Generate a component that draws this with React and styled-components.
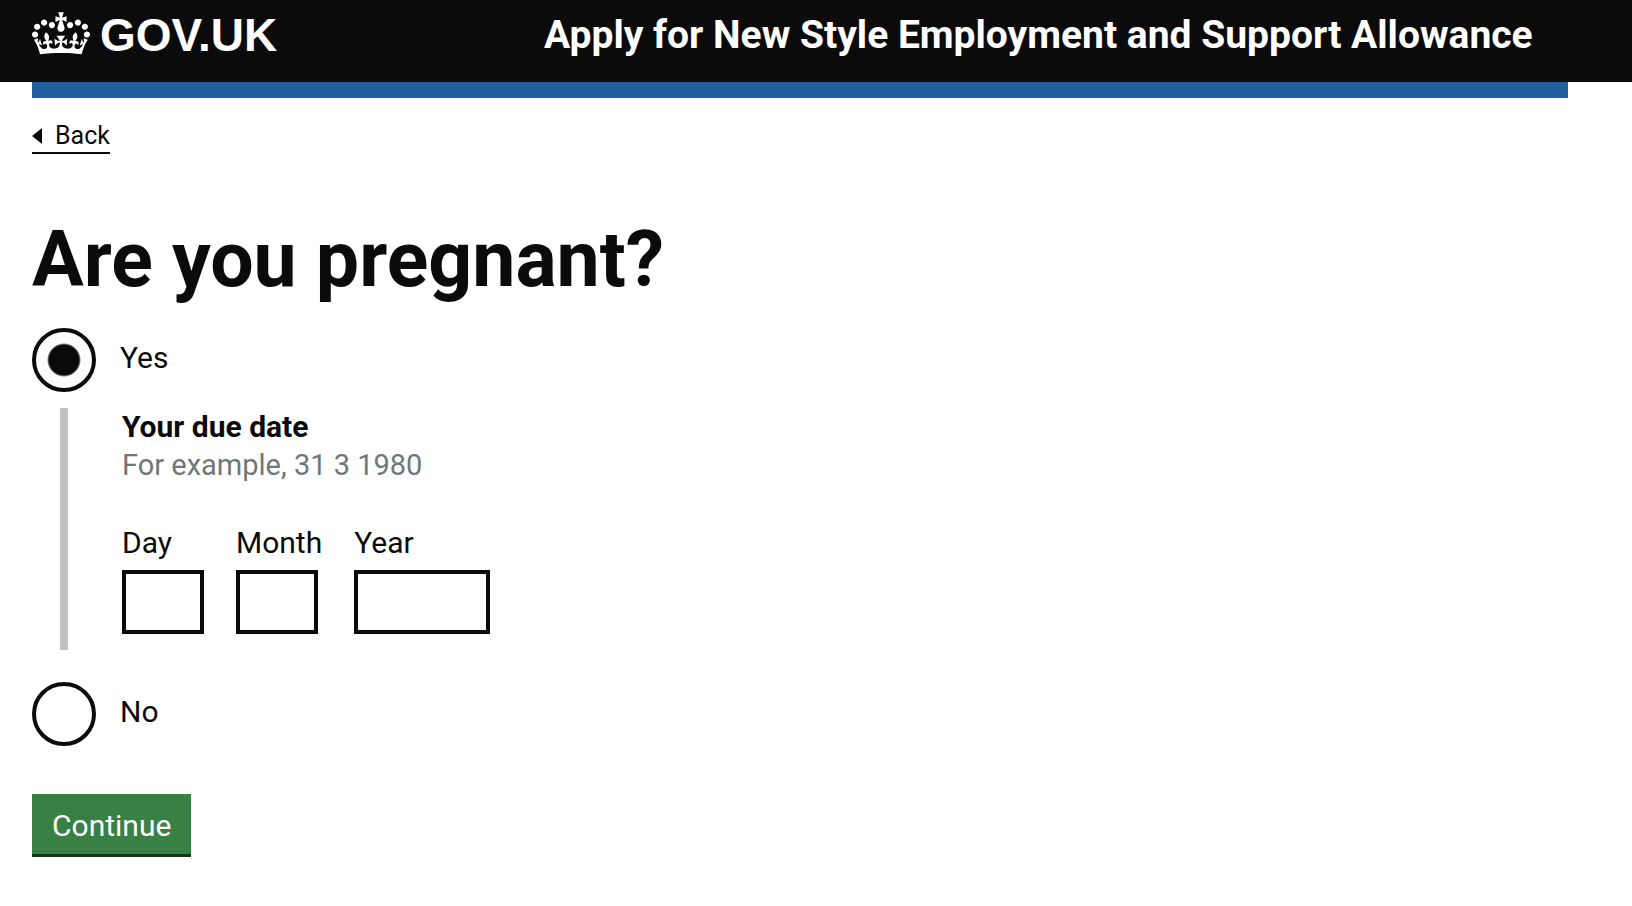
import React, { useState } from "react";
import styled, { createGlobalStyle } from "styled-components";

const ink = "#0b0b0b";

const GlobalStyle = createGlobalStyle`
  *, *::before, *::after {
    box-sizing: border-box;
  }

  body {
    margin: 0;
    background: #ffffff;
    color: ${ink};
    font-family: Roboto, "Liberation Sans", sans-serif;
    font-size: 30px;
    line-height: 38px;
  }
`;

const Header = styled.header`
  background: ${ink};
  color: #ffffff;
`;

const HeaderInner = styled.div`
  display: grid;
  grid-template-columns: 1fr 2fr;
  height: 82px;
  margin: 0 64px 0 32px;
`;

const LogoLink = styled.a`
  display: flex;
  gap: 10px;
  height: 67px;
  align-items: center;
  color: inherit;
  font: bold 46px/50px "Liberation Sans", Arial, sans-serif;
  text-decoration: none;
`;

const LogoText = styled.span`
  padding-top: 2px;
`;

const Crown = styled.svg`
  width: 58px;
  height: 43px;
  fill: currentColor;
`;

const ServiceLink = styled.a`
  padding-top: 12px;
  color: inherit;
  font-size: 39px;
  font-weight: 700;
  line-height: 46px;
  text-decoration: none;
  white-space: nowrap;
`;

const Container = styled.div`
  margin: 0 64px 0 32px;
`;

const BlueBar = styled.div`
  height: 16px;
  background: #235e9f;
`;

const BackLink = styled.a`
  display: inline-flex;
  align-items: center;
  gap: 13px;
  margin-top: 22px;
  border-bottom: 2px solid ${ink};
  color: inherit;
  font-size: 25px;
  line-height: 32px;
  text-decoration: none;

  &::before {
    content: "";
    border: solid transparent;
    border-width: 8px 10px 8px 0;
    border-right-color: ${ink};
  }
`;

const Form = styled.form`
  padding: 66px 0 48px;
`;

const Fieldset = styled.fieldset`
  min-width: 0;
  margin: 0;
  padding: 0;
  border: 0;
`;

const Title = styled.h1`
  margin: 0 0 28px;
  font-size: 77px;
  font-weight: 700;
  line-height: 80px;
`;

const Option = styled.div`
  display: flex;
  align-items: center;
  gap: 24px;
`;

const Radio = styled.input`
  appearance: none;
  flex: none;
  width: 64px;
  height: 64px;
  margin: 0;
  border: 4px solid ${ink};
  border-radius: 50%;
  background: #ffffff;

  &:checked {
    background: radial-gradient(circle, ${ink} 0 15px, #ffffff 17px);
  }
`;

const OptionLabel = styled.label`
  padding-bottom: 4px;
`;

const Conditional = styled.div`
  margin: 16px 0 32px 28px;
  padding: 0 0 16px 54px;
  border-left: 8px solid #bfc1c3;
`;

const Legend = styled.legend`
  padding: 0;
  font-weight: 700;
`;

const Hint = styled.p`
  margin: 0 0 40px;
  color: #6f777b;
  font-size: 29px;
`;

const DateFields = styled.div`
  display: flex;
`;

const DateField = styled.div`
  display: flex;
  flex-direction: column;
  gap: 8px;
  padding-right: 32px;
`;

const DateInput = styled.input`
  width: ${({ $digits }) => ($digits === 4 ? 136 : 82)}px;
  height: 64px;
  padding: 8px;
  border: 4px solid ${ink};
  border-radius: 0;
  background: #ffffff;
  color: inherit;
  font: inherit;
`;

const ContinueButton = styled.button`
  display: block;
  margin-top: 48px;
  padding: 14px 20px 10px;
  border: 0;
  border-bottom: 3px solid #14361b;
  background: #388043;
  color: #ffffff;
  font: inherit;
  line-height: 36px;
`;

const dateParts = [
  { id: "day", label: "Day", digits: 2 },
  { id: "month", label: "Month", digits: 2 },
  { id: "year", label: "Year", digits: 4 },
];

function CrownIcon() {
  return (
    <Crown viewBox="0 0 132 97" aria-hidden="true">
      <path
        fillRule="evenodd"
        d="M25 30.2c3.5 1.5 7.7-.2 9.1-3.7 1.5-3.6-.2-7.8-3.9-9.2-3.6-1.4-7.6.3-9.1 3.9-1.4 3.5.3 7.5 3.9 9zM9 39.5c3.6 1.5 7.8-.2 9.2-3.7 1.5-3.6-.2-7.8-3.9-9.1-3.6-1.5-7.6.2-9.1 3.8-1.4 3.5.3 7.5 3.8 9zM4.4 57.2c3.5 1.5 7.7-.2 9.1-3.8 1.5-3.6-.2-7.7-3.9-9.1-3.5-1.5-7.6.3-9.1 3.8-1.4 3.5.3 7.6 3.9 9.1zm38.3-21.4c3.5 1.5 7.7-.2 9.1-3.8 1.5-3.6-.2-7.7-3.9-9.1-3.6-1.5-7.6.3-9.1 3.8-1.3 3.6.4 7.7 3.9 9.1zm64.4-5.6c-3.6 1.5-7.8-.2-9.1-3.7-1.5-3.6.2-7.8 3.8-9.2 3.6-1.4 7.7.3 9.2 3.9 1.3 3.5-.4 7.5-3.9 9zm15.9 9.3c-3.6 1.5-7.7-.2-9.1-3.7-1.5-3.6.2-7.8 3.7-9.1 3.6-1.5 7.7.2 9.2 3.8 1.5 3.5-.3 7.5-3.8 9zm4.7 17.7c-3.6 1.5-7.8-.2-9.2-3.8-1.5-3.6.2-7.7 3.9-9.1 3.6-1.5 7.7.3 9.2 3.8 1.3 3.5-.4 7.6-3.9 9.1zM89.3 35.8c-3.6 1.5-7.8-.2-9.2-3.8-1.4-3.6.2-7.7 3.9-9.1 3.6-1.5 7.7.3 9.2 3.8 1.4 3.6-.3 7.7-3.9 9.1zM69.7 17.7l8.9 4.7V9.3l-8.9 2.8c-.2-.3-.5-.6-.9-.9L72.4 0H59.6l3.5 11.2c-.3.3-.6.5-.9.9l-8.8-2.8v13.1l8.8-4.7c.3.3.6.7.9.9l-5 15.4v.1c-.2.8-.4 1.6-.4 2.4 0 4.1 3.1 7.5 7 8.1h.2c.3 0 .7.1 1 .1.4 0 .7 0 1-.1h.2c4-.6 7.1-4.1 7.1-8.1 0-.8-.1-1.7-.4-2.4V34l-5.1-15.4c.4-.2.7-.6 1-.9zM66 92.8c16.9 0 32.8 1.1 47.1 3.2 4-16.9 8.9-26.7 14-33.5l-9.6-3.4c1 4.9 1.1 7.2 0 10.2-1.5-1.4-3-4.3-4.2-8.7L108.6 76c2.8-2 5-3.2 7.5-3.3-4.4 9.4-10 11.9-13.6 11.2-4.3-.8-6.3-4.6-5.6-7.9 1-4.7 5.7-5.9 8-.5 4.3-8.7-3-11.4-7.6-8.8 7.1-7.2 7.9-13.5 2.1-21.1-8 6.1-8.1 12.3-4.5 20.8-4.7-5.4-12.1-2.5-9.5 6.2 3.4-5.2 7.9-2 7.2 3.1-.6 4.3-6.4 7.8-13.5 7.2-10.3-.9-10.9-8-11.2-13.8 2.5-.5 7.1 1.8 11 7.3L80.2 60c-4.1 4.4-8 5.3-12.3 5.4 1.4-4.4 8-11.6 8-11.6H55.5s6.4 7.2 7.9 11.6c-4.2-.1-8-1-12.3-5.4l1.4 16.4c3.9-5.5 8.5-7.7 10.9-7.3-.3 5.8-.9 12.8-11.1 13.8-7.2.6-12.9-2.9-13.5-7.2-.7-5 3.8-8.3 7.1-3.1 2.7-8.7-4.6-11.6-9.4-6.2 3.7-8.5 3.6-14.7-4.6-20.8-5.8 7.6-5 13.9 2.2 21.1-4.7-2.6-11.9.1-7.7 8.8 2.3-5.5 7.1-4.2 8.1.5.7 3.3-1.3 7.1-5.7 7.9-3.5.7-9-1.8-13.5-11.2 2.5.1 4.7 1.3 7.5 3.3l-4.7-15.4c-1.2 4.4-2.7 7.2-4.3 8.7-1.1-3-.9-5.3 0-10.2l-9.5 3.4c5 6.9 9.9 16.7 14 33.5 14.8-2.1 30.8-3.2 47.7-3.2z"
      />
    </Crown>
  );
}

function DueDate() {
  return (
    <Conditional>
      <Fieldset aria-describedby="due-date-hint">
        <Legend>Your due date</Legend>
        <Hint id="due-date-hint">For example, 31 3 1980</Hint>
        <DateFields>
          {dateParts.map(({ id, label, digits }) => (
            <DateField key={id}>
              <label htmlFor={id}>{label}</label>
              <DateInput id={id} name={id} type="text" inputMode="numeric" $digits={digits} />
            </DateField>
          ))}
        </DateFields>
      </Fieldset>
    </Conditional>
  );
}

export default function App() {
  const [answer, setAnswer] = useState("yes");

  return (
    <>
      <GlobalStyle />
      <Header>
        <HeaderInner>
          <LogoLink href="#home">
            <CrownIcon />
            <LogoText>GOV.UK</LogoText>
          </LogoLink>
          <ServiceLink href="#service">
            Apply for New Style Employment and Support Allowance
          </ServiceLink>
        </HeaderInner>
      </Header>
      <Container>
        <BlueBar />
        <BackLink href="#back">Back</BackLink>
        <main>
          <Form onSubmit={(event) => event.preventDefault()}>
            <Fieldset role="radiogroup" aria-labelledby="question">
              <Title id="question">Are you pregnant?</Title>
              <Option>
                <Radio
                  type="radio"
                  id="pregnant-yes"
                  name="pregnant"
                  value="yes"
                  checked={answer === "yes"}
                  onChange={() => setAnswer("yes")}
                />
                <OptionLabel htmlFor="pregnant-yes">Yes</OptionLabel>
              </Option>
              {answer === "yes" && <DueDate />}
              <Option>
                <Radio
                  type="radio"
                  id="pregnant-no"
                  name="pregnant"
                  value="no"
                  checked={answer === "no"}
                  onChange={() => setAnswer("no")}
                />
                <OptionLabel htmlFor="pregnant-no">No</OptionLabel>
              </Option>
            </Fieldset>
            <ContinueButton type="submit">Continue</ContinueButton>
          </Form>
        </main>
      </Container>
    </>
  );
}
